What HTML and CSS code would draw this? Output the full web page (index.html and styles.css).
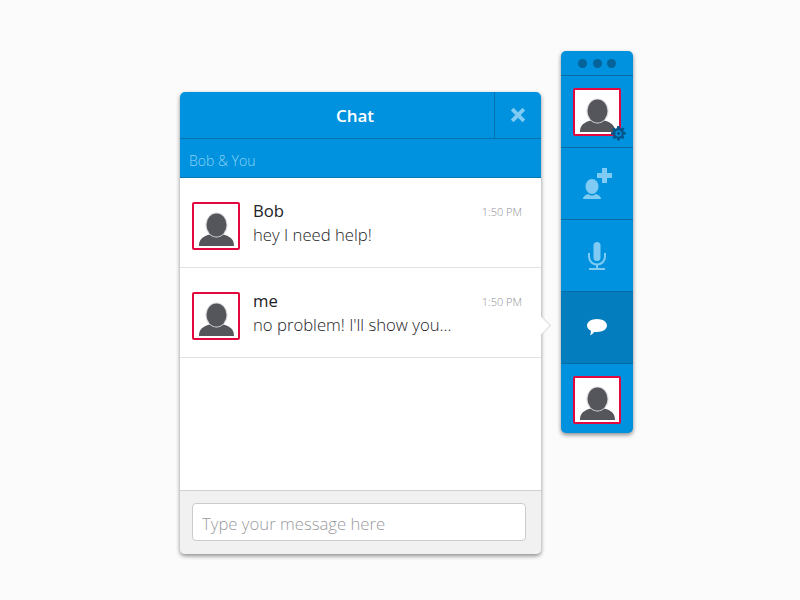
FILE: index.html
```html
<!doctype html>
<html lang="en">
<head>
    <meta charset="utf-8">
    <meta name="viewport" content="width=device-width, initial-scale=1">
    <title>Chat</title>

    <link rel="stylesheet" href="styles.css">
</head>
<body>
<svg class="defs" width="0" height="0">
    <symbol id="person" viewBox="0 0 44 44">
        <path class="person-body" d="M5 42c0-6 3-8.500 7.500-10.500 2-.8 3.500-1.500 10-1.500s8 .7 10 1.500C37 33.500 40 36 40 42z"/>
        <ellipse class="person-halo" cx="22.500" cy="21" rx="11" ry="12.500"/>
        <ellipse class="person-body" cx="22.500" cy="21" rx="10" ry="11.500"/>
    </symbol>
</svg>

<div class="chat">
    <div class="chat-head">
        <div class="chat-title">Chat</div>
        <div class="chat-close">
            <svg width="16" height="16" viewBox="0 0 16 16"><path d="M3.500 0.800 8 5.300 12.500 0.800 15.200 3.500 10.700 8 15.200 12.500 12.500 15.200 8 10.700 3.500 15.200 0.800 12.500 5.300 8 0.800 3.500z"/></svg>
        </div>
    </div>
    <div class="chat-sub">Bob &amp; You</div>

    <div class="chat-list">
        <div class="msg">
            <div class="avatar"><svg><use href="#person"/></svg></div>
            <div class="msg-body">
                <div class="msg-name">Bob</div>
                <div class="msg-text">hey I need help!</div>
            </div>
            <span class="msg-time">1:50 PM</span>
        </div>
        <div class="msg">
            <div class="avatar"><svg><use href="#person"/></svg></div>
            <div class="msg-body">
                <div class="msg-name">me</div>
                <div class="msg-text">no problem! I'll show you...</div>
            </div>
            <span class="msg-time">1:50 PM</span>
        </div>
    </div>

    <div class="chat-foot">
        <input class="chat-input" type="text" placeholder="Type your message here">
    </div>
    <div class="chat-arrow"></div>
</div>

<div class="side">
    <div class="side-dots"><span></span><span></span><span></span></div>
    <div class="side-item">
        <div class="avatar-wrap">
            <div class="avatar"><svg><use href="#person"/></svg></div>
            <svg class="gear" width="15" height="15" viewBox="0 0 16 16">
                <circle class="gear-hole" cx="8" cy="8" r="4"/>
                <path fill-rule="evenodd" d="M6.700 0h2.600l.3 2.100 1.200.5 1.700-1.300 1.900 1.900-1.300 1.700.5 1.200 2.100.3v2.600l-2.100.3-.5 1.200 1.300 1.700-1.900 1.900-1.700-1.300-1.200.5-.3 2.100H6.700l-.3-2.100-1.200-.5-1.700 1.300-1.900-1.900 1.300-1.700-.5-1.200L0 9.300V6.700l2.100-.3.5-1.200-1.300-1.700 1.900-1.900 1.700 1.300 1.200-.5zM8 4.700a3.300 3.300 0 1 0 0 6.600 3.300 3.300 0 0 0 0-6.600zM8 6.200a1.800 1.800 0 1 1 0 3.600 1.800 1.800 0 0 1 0-3.600z"/>
            </svg>
        </div>
    </div>
    <div class="side-item">
        <svg class="icon" width="30" height="31" viewBox="0 0 30 31">
            <path d="M20 0h5v5h5v5h-5v5h-5v-5h-5V5h5z"/>
            <ellipse cx="10" cy="18.500" rx="6.500" ry="7.500"/>
            <path d="M1 31c0-2.500 2-4 5.500-5 1 1 2 1.500 3.500 1.500s2.500-.5 3.500-1.500c3.500 1 5.500 2.500 5.500 5z"/>
        </svg>
    </div>
    <div class="side-item">
        <svg class="icon" width="18" height="28" viewBox="0 0 18 28">
            <rect x="5.500" y="0" width="7" height="19" rx="3.500"/>
            <path d="M1 11v3.500c0 4.500 3.500 8 8 8s8-3.500 8-8V11" fill="none" stroke="#7fcbf3" stroke-width="2"/>
            <path d="M8 22h2v4H8z"/>
            <path d="M1 26h16v2H1z"/>
        </svg>
    </div>
    <div class="side-item side-active">
        <svg width="20" height="17" viewBox="0 0 20 17">
            <path fill="#fff" d="M10 0c5.500 0 10 2.800 10 6.500S15.500 13 10 13c-.9 0-1.800-.1-2.600-.2C6.200 14.400 4.500 15.800 3 16.500c.6-1.300 1-2.900 .9-4.700C1.500 10.700 0 8.700 0 6.500 0 2.800 4.500 0 10 0z"/>
        </svg>
    </div>
    <div class="side-item side-last">
        <div class="avatar"><svg><use href="#person"/></svg></div>
    </div>
</div>
</body>
</html>
```

FILE: styles.css
```css
body {
    margin: 0;
    height: 600px;
    box-sizing: border-box;
    padding: 51px 0 0 180px;
    overflow: hidden;
    display: flex;
    align-items: flex-start;
    gap: 20px;
    background: #fbfbfb;
    font-family: "Open Sans", "Liberation Sans", sans-serif;
    color: #222226;
}

.defs {
    position: absolute;
}

.person-body {
    fill: #55555c;
}

.person-halo {
    fill: #d8d8da;
}

/* chat panel */
.chat {
    position: relative;
    width: 361px;
    height: 462px;
    margin-top: 41px;
    display: flex;
    flex-direction: column;
    background: #fff;
    border-radius: 5px;
    box-shadow: 0 2px 4px rgba(0, 0, 0, 0.45);
}

.chat-head {
    height: 46px;
    flex: none;
    display: flex;
    background: #0092de;
    border-bottom: 1px solid #0672ab;
    border-radius: 5px 5px 0 0;
}

.chat-title {
    flex: 1;
    padding-left: 36px;
    text-align: center;
    line-height: 48px;
    font-size: 17px;
    font-weight: 600;
    color: #fff;
}

.chat-close {
    width: 46px;
    display: flex;
    align-items: center;
    justify-content: center;
    border-left: 1px solid #0672ab;
}

.chat-close path {
    fill: #7fcbf3;
}

.chat-sub {
    height: 38px;
    flex: none;
    padding-left: 9px;
    line-height: 43px;
    font-size: 14px;
    font-weight: 300;
    color: #8ed2f5;
    background: #0092de;
    border-bottom: 1px solid #0679b5;
}

.chat-list {
    flex: 1;
}

.msg {
    height: 89px;
    display: flex;
    padding: 0 19px 0 12px;
    align-items: center;
    gap: 13px;
    border-bottom: 1px solid #e2e2e4;
}

.msg .avatar {
    align-self: flex-start;
    margin-top: 24px;
}

.avatar {
    width: 44px;
    height: 44px;
    flex: none;
    background: #fff;
    border: 2px solid #e2083f;
    border-radius: 2px;
}

.avatar svg {
    display: block;
    width: 44px;
    height: 44px;
}

.msg-body {
    flex: 1;
}

.msg-name {
    font-size: 16.700px;
    line-height: 24px;
}

.msg-text {
    font-size: 16.700px;
    font-weight: 300;
    line-height: 24px;
}

.msg-time {
    align-self: flex-start;
    margin-top: 26px;
    font-size: 11px;
    font-weight: 300;
    line-height: 15px;
    color: #8f8f96;
}

.chat-foot {
    height: 63px;
    flex: none;
    padding: 0 15px 0 12px;
    display: flex;
    align-items: center;
    background: #f1f1f1;
    border-top: 1px solid #d0d0d0;
    border-radius: 0 0 5px 5px;
}

.chat-input {
    width: 100%;
    height: 38px;
    box-sizing: border-box;
    padding: 3px 9px 0;
    margin-bottom: 1px;
    font: 300 16.700px "Open Sans", "Liberation Sans", sans-serif;
    background: #fff;
    border: 1px solid #cbcbcb;
    border-radius: 4px;
    outline: none;
}

.chat-input::placeholder {
    color: #9a9a9e;
    opacity: 1;
}

.chat-arrow {
    position: absolute;
    left: 354px;
    top: 227px;
    width: 13px;
    height: 13px;
    background: #fff;
    transform: rotate(45deg);
    box-shadow: 1px -1px 0 #dcdcdc;
}

/* side bar */
.side {
    width: 72px;
    height: 382px;
    display: flex;
    flex-direction: column;
    background: #0092de;
    border-radius: 5px;
    box-shadow: 0 2px 4px rgba(0, 0, 0, 0.45);
    overflow: hidden;
}

.side-dots {
    height: 25px;
    flex: none;
    display: flex;
    align-items: center;
    justify-content: center;
    gap: 5.500px;
    box-sizing: border-box;
    padding-top: 1px;
    border-bottom: 1px solid #056ca3;
}

.side-dots span {
    width: 9px;
    height: 9px;
    border-radius: 50%;
    background: #05639a;
}

.side-item {
    height: 71px;
    flex: none;
    display: flex;
    align-items: center;
    justify-content: center;
    border-bottom: 1px solid #056ca3;
}

.side-active {
    background: #047dbe;
}

.side-last {
    height: 67px;
    padding-top: 2px;
    border-bottom: 0;
}

.icon {
    fill: #7fcbf3;
}

.avatar-wrap {
    position: relative;
}

.gear {
    position: absolute;
    right: -5px;
    bottom: -5px;
    fill: #04568a;
}

.gear-hole {
    fill: #0092de;
}
```
